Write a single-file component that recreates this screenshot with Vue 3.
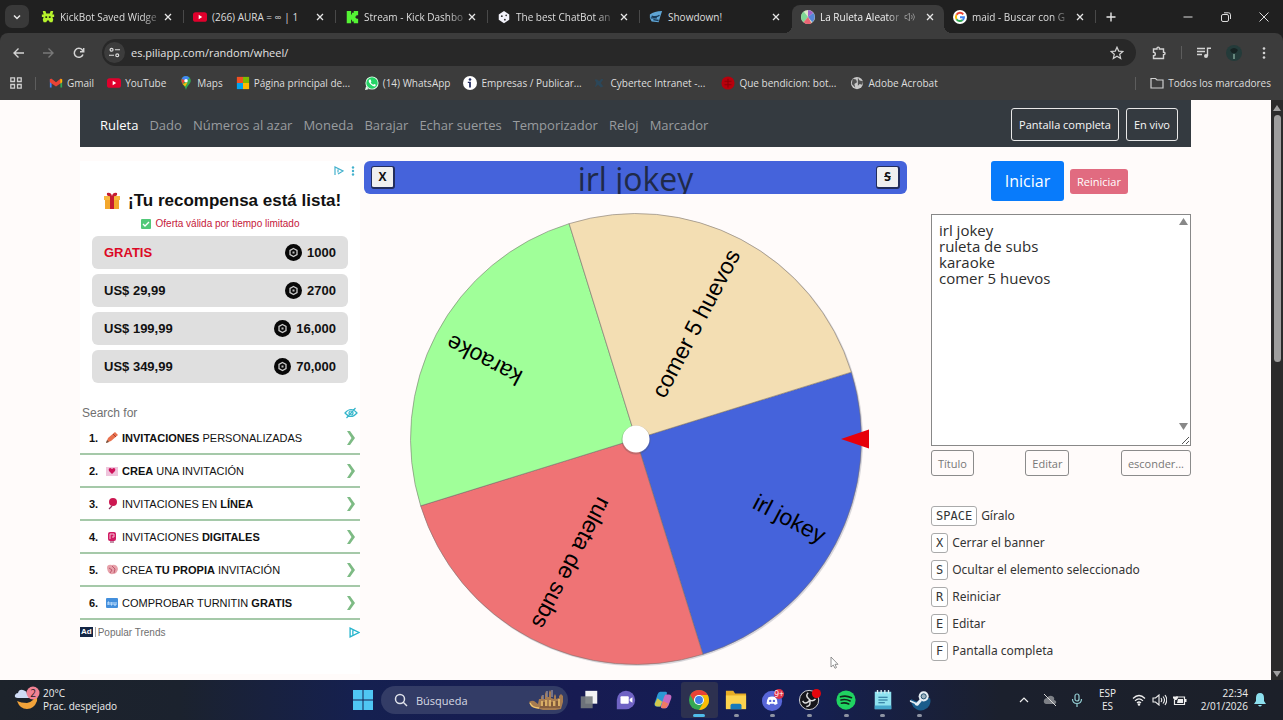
<template>
  <div class="desktop">
    <header class="browser">
      <div class="tabstrip">
        <button class="tab-search" aria-label="Buscar pestañas">
          <svg width="10" height="10" viewBox="0 0 10 10"><path d="M2 3.500l3 3 3-3" fill="none" stroke="#e8e8e8" stroke-width="1.500" /></svg>
        </button>
        <div v-for="(tab, i) in tabs" :key="i" class="tab" :class="{ active: tab.active, divided: tab.divided }">
          <svg class="icon14" viewBox="0 0 16 16" v-html="icons[tab.icon]"></svg>
          <span class="tab-title" :class="{ faded: tab.faded }">{{ tab.title }}</span>
          <svg v-if="tab.active" class="sound" viewBox="0 0 12 12">
            <path d="M1 4.500h2L5.500 2v8L3 7.500H1zM7.500 4q1.500 2 0 4M9 2.500q3 3.500 0 7" fill="none" stroke="#8b8b8b" />
          </svg>
          <button class="tab-close" aria-label="Cerrar">
            <svg width="8" height="8" viewBox="0 0 8 8"><path d="M1 1l6 6M7 1l-6 6" stroke="#e6e6e6" stroke-width="1.300" /></svg>
          </button>
        </div>
        <button class="new-tab" aria-label="Nueva pestaña">
          <svg width="10" height="10" viewBox="0 0 10 10"><path d="M5 .5v9M.5 5h9" stroke="#e6e6e6" stroke-width="1.400" /></svg>
        </button>
        <div class="window-buttons">
          <button aria-label="Minimizar"><svg width="10" height="10" viewBox="0 0 10 10"><path d="M.5 5h9" stroke="#ddd" /></svg></button>
          <button aria-label="Restaurar">
            <svg width="10" height="10" viewBox="0 0 10 10" fill="none" stroke="#ddd"><rect x=".5" y="2.500" width="7" height="7" rx="1.500" /><path d="M3 .8h4.500a2 2 0 0 1 2 2V7" /></svg>
          </button>
          <button aria-label="Cerrar ventana"><svg width="10" height="10" viewBox="0 0 10 10"><path d="M.5.5l9 9M9.500.5l-9 9" stroke="#ddd" /></svg></button>
        </div>
      </div>

      <div class="toolbar">
        <button class="nav-btn" aria-label="Atrás"><svg class="icon14" viewBox="0 0 14 14"><path d="M12 7H2M6.500 2.500L2 7l4.500 4.500" fill="none" stroke="#d4d4d4" stroke-width="1.400" /></svg></button>
        <button class="nav-btn" aria-label="Adelante"><svg class="icon14" viewBox="0 0 14 14"><path d="M1 7h10M6.500 2.500L11 7l-4.500 4.500" fill="none" stroke="#787878" stroke-width="1.400" /></svg></button>
        <button class="nav-btn" aria-label="Recargar">
          <svg class="icon14" viewBox="0 0 14 14"><path d="M11 8.500A4.500 4.500 0 1 1 10.300 4l1 1.300M11.700 2v3.700H8" fill="none" stroke="#d4d4d4" stroke-width="1.500" /></svg>
        </button>
        <div class="omnibox">
          <span class="site-info">
            <svg width="11" height="11" viewBox="0 0 12 12" fill="none" stroke="#dcdcdc" stroke-width="1.300"><circle cx="2.800" cy="3" r="1.600" /><path d="M6.500 3H12M0 9h5.500" /><circle cx="9" cy="9" r="1.600" /></svg>
          </span>
          <input v-model="url" aria-label="Dirección" spellcheck="false" />
          <svg class="icon14" viewBox="0 0 14 14"><path d="M7 1.200l1.700 3.900 4.200.4-3.200 2.800 1 4.200L7 10.300l-3.700 2.200 1-4.200L1.100 5.500l4.200-.4z" fill="none" stroke="#d4d4d4" stroke-width="1.200" /></svg>
        </div>
        <div class="tools">
          <svg class="icon14" viewBox="0 0 14 14"><path d="M1.500 3h3.500V2.300a1.200 1.200 0 0 1 2.400 0V3H11.500v3.200h.3a1.200 1.200 0 0 1 0 2.400h-.3V12.500h-10V9.800a1.800 1.800 0 0 0 0-3.600z" fill="none" stroke="#d4d4d4" stroke-width="1.400" /></svg>
          <i class="bar"></i>
          <svg class="icon14" viewBox="0 0 14 14"><path d="M0 2.500h8M0 5.500h8M0 8.500h5M10.500 10V2.200H14" fill="none" stroke="#d4d4d4" stroke-width="1.400" /><circle cx="9" cy="10" r="2" fill="#d4d4d4" /></svg>
          <svg class="avatar" viewBox="0 0 16 16"><circle cx="8" cy="8" r="8" fill="#243b3a" /><path d="M4 5q4-4 8 0l-2 3H6z" fill="#172323" /><path d="M8 9v5" stroke="#7da294" stroke-width="1.500" /></svg>
          <svg class="icon14" viewBox="0 0 14 14" fill="#d4d4d4"><circle cx="7" cy="2.500" r="1.300" /><circle cx="7" cy="7" r="1.300" /><circle cx="7" cy="11.500" r="1.300" /></svg>
        </div>
      </div>

      <nav class="bookmarks">
        <svg class="apps" viewBox="0 0 12 12" fill="none" stroke="#cfcfcf" stroke-width="1.300"><path d="M.8.8h3.700v3.700H.8zM7.500.8h3.700v3.700H7.500zM.8 7.500h3.700v3.700H.8zM7.500 7.500h3.700v3.700H7.500z" /></svg>
        <i class="bar"></i>
        <a v-for="b in bookmarks" :key="b.title" href="#" :class="{ long: b.long }">
          <svg class="icon14" viewBox="0 0 16 16" v-html="icons[b.icon]"></svg>{{ b.title }}
        </a>
        <div class="all-bookmarks">
          <i class="bar"></i>
          <a href="#">
            <svg class="icon14" viewBox="0 0 14 14"><path d="M1 2.500h4.500L7 4h6v8H1z" fill="none" stroke="#cfcfcf" stroke-width="1.200" /></svg>Todos los marcadores
          </a>
        </div>
      </nav>
    </header>

    <div class="viewport">
      <div class="page">
        <nav class="site-nav">
          <a v-for="(link, i) in links" :key="link" href="#" :class="{ current: i === 0 }">{{ link }}</a>
          <div class="site-actions">
            <button>Pantalla completa</button>
            <button>En vivo</button>
          </div>
        </nav>

        <main class="columns">
          <aside class="ads">
            <section class="offer">
              <div class="ad-marks">
                <svg width="10" height="10" viewBox="0 0 10 10"><path d="M1 9V1l8 4-5 3M4 3.500v3" fill="none" stroke="#43b1cd" stroke-width="1.200" /></svg>
                <svg width="4" height="10" viewBox="0 0 4 10" fill="#43b1cd"><circle cx="2" cy="1.500" r="1.200" /><circle cx="2" cy="5" r="1.200" /><circle cx="2" cy="8.500" r="1.200" /></svg>
              </div>
              <h2>
                <svg width="16" height="18" viewBox="0 0 16 18"><path d="M1 6h14v11H1z" fill="#f3a72d" /><path d="M0 4h16v4H0z" fill="#f8b83f" /><path d="M6 4h4v13H6zM8 4Q2 5 3 1q4-1 5 3 1-4 5-3 1 4-5 3z" fill="#c51d31" /></svg>
                ¡Tu recompensa está lista!
              </h2>
              <p>
                <svg width="10" height="10" viewBox="0 0 10 10"><rect width="10" height="10" rx="1" fill="#51c878" /><path d="M2 5l2 2 4-4" fill="none" stroke="#fff" stroke-width="1.300" /></svg>
                Oferta válida por tiempo limitado
              </p>
              <ul>
                <li v-for="o in offers" :key="o.coins">
                  <span :class="{ free: o.price === 'GRATIS' }">{{ o.price }}</span>
                  <span class="coins">
                    <svg width="17" height="17" viewBox="0 0 17 17"><circle cx="8.500" cy="8.500" r="8.500" fill="#080808" /><path d="M8.500 4.500l3.500 2v4l-3.500 2-3.500-2v-4z" fill="none" stroke="#ccc" stroke-width="1.300" /><rect x="7.500" y="7.500" width="2" height="2" fill="#bbb" /></svg>
                    {{ o.coins }}
                  </span>
                </li>
              </ul>
            </section>

            <section class="searches">
              <div class="search-head">
                Search for
                <svg width="14" height="12" viewBox="0 0 14 12" fill="none" stroke="#35b6cb" stroke-width="1.200"><path d="M1 6q6-7 12 0-6 7-12 0zM11.500 1l-9 10" /><circle cx="7" cy="6" r="2" /></svg>
              </div>
              <ol>
                <li v-for="(s, i) in searches" :key="i">
                  <b class="num">{{ i + 1 }}.</b>
                  <svg width="12" height="12" viewBox="0 0 12 12" v-html="s.icon"></svg>
                  <a href="#"><component :is="part.bold ? 'b' : 'span'" v-for="(part, j) in s.parts" :key="j">{{ part.text }}</component></a>
                  <svg class="arrow" width="9" height="14" viewBox="0 0 9 14"><path d="M0 0h3l5 7-5 7H0l4.500-7z" fill="#7dbb85" /></svg>
                </li>
              </ol>
              <footer>
                <span class="ad-badge">Ad</span><i></i><span>Popular Trends</span>
                <svg width="11" height="11" viewBox="0 0 10 10"><path d="M1 1l8 4-8 4zM3.500 3v4" fill="none" stroke="#27b5cd" stroke-width="1.200" /></svg>
              </footer>
            </section>
          </aside>

          <section class="game">
            <div class="banner">
              <button>X</button>
              <h1>{{ entries[0] }}</h1>
              <button><s>S</s></button>
            </div>
            <svg class="wheel" viewBox="-235 -235 470 470">
              <circle r="226" cx="1" cy="1" fill="#c9c8ce" opacity=".7" />
              <g class="slices" :transform="`rotate(${rotation})`">
                <g v-for="(slice, i) in slices" :key="i" :transform="`rotate(${slice.angle})`">
                  <path :d="slice.path" :fill="slice.color" stroke="#77706c" stroke-width=".5" />
                  <text x="212" y="7" text-anchor="end">{{ slice.label }}</text>
                </g>
              </g>
              <circle r="14.500" cy="1" fill="#555" opacity=".3" />
              <circle r="13.500" fill="#fff" />
              <path d="M205 0l28-9.500v19z" fill="#e6000a" />
            </svg>
            <svg class="cursor" width="9" height="13" viewBox="0 0 9 13"><path d="M1 1v10l2.300-2L5 12.300l1.500-.8L5 8.300h3z" fill="#fff" stroke="#777" stroke-width=".8" /></svg>
          </section>

          <aside class="controls">
            <div class="run">
              <button class="start" @click="spin">Iniciar</button>
              <button class="reset" @click="reset">Reiniciar</button>
            </div>
            <div class="list-box">
              <textarea v-model="list" aria-label="Lista" spellcheck="false"></textarea>
              <svg class="up" width="9" height="7" viewBox="0 0 9 7"><path d="M4.500 0L9 7H0z" fill="#888" /></svg>
              <svg class="down" width="9" height="7" viewBox="0 0 9 7"><path d="M4.500 7L9 0H0z" fill="#888" /></svg>
              <svg class="grip" width="9" height="9" viewBox="0 0 9 9"><path d="M1 8l7-7M5 8l3-3" stroke="#555" /></svg>
            </div>
            <div class="list-actions">
              <button>Título</button>
              <button>Editar</button>
              <button>esconder...</button>
            </div>
            <ul class="keys">
              <li v-for="k in keys" :key="k[0]"><kbd>{{ k[0] }}</kbd>{{ k[1] }}</li>
            </ul>
          </aside>
        </main>
      </div>
      <div class="scrollbar">
        <svg width="8" height="6" viewBox="0 0 8 6"><path d="M4 0l4 6H0z" fill="#a0a0a0" /></svg>
        <div class="thumb"></div>
        <svg class="scroll-down" width="8" height="6" viewBox="0 0 8 6"><path d="M4 6l4-6H0z" fill="#a0a0a0" /></svg>
      </div>
    </div>

    <footer class="taskbar">
      <div class="weather">
        <svg width="28" height="28" viewBox="0 0 28 28">
          <path d="M3 15q3 8 10 8t10-8q1-4-1-7-2 8-9 9-6 0-10-2z" fill="#f2a33a" />
          <path d="M4 12q-4 0-3-3 1-2 3-2 1-4 5-3 4 1 4 4 3 0 3 4z" fill="#cfdcf5" />
          <circle cx="19" cy="7" r="6.500" fill="#f08294" />
          <text x="19" y="11" text-anchor="middle" font-size="10" fill="#2a1b25">2</text>
        </svg>
        <div>20°C<br />Prac. despejado</div>
      </div>
      <div class="dock">
        <button class="start-menu" aria-label="Inicio">
          <svg width="20" height="20" viewBox="0 0 20 20" fill="#4fc6f3"><path d="M0 0h9.500v9.500H0zM10.500 0H20v9.500h-9.500zM0 10.500h9.500V20H0zM10.500 10.500H20V20h-9.500z" /></svg>
        </button>
        <label class="search">
          <svg width="14" height="14" viewBox="0 0 14 14"><circle cx="6" cy="6" r="4.500" fill="none" stroke="#dfe2ea" stroke-width="1.500" /><path d="M9 9l4 4" stroke="#dfe2ea" stroke-width="1.500" /></svg>
          <input placeholder="Búsqueda" />
          <svg width="38" height="20" viewBox="0 0 38 20">
            <path d="M1 12q3-2 5-1l4 3 1-5h2V7l1-2 1 2v2h2V4l1-3 1 3v3h2V2l1-2 1 2v6l3 1V6l1-2 1 2v3l3-1v-2l2-2 2 2v6l-2 7q-8 2-18 1L4 17z" fill="#a67b50" />
            <path d="M19 1v6M24 0v7M15 5v4" stroke="#8d8795" stroke-width="1.500" />
            <path d="M2 13q2 5 9 5M14 11v5M18 10v6M22 10v7M26 11v5M31 9v7" fill="none" stroke="#f0c56f" stroke-width="1.400" />
            <path d="M12 17h20M16 12v4M24 12v4M29 11v5" stroke="#66432e" stroke-width="1.200" />
          </svg>
        </label>
        <div class="apps-row">
          <button v-for="app in apps" :key="app.name" :class="{ running: app.running, focused: app.focused }" :aria-label="app.name">
            <svg width="24" height="24" viewBox="0 0 24 24" v-html="app.icon"></svg>
          </button>
        </div>
      </div>
      <div class="tray">
        <svg width="10" height="10" viewBox="0 0 10 10"><path d="M1 7l4-4 4 4" fill="none" stroke="#eee" stroke-width="1.200" /></svg>
        <svg class="cloud" width="14" height="14" viewBox="0 0 14 14"><path d="M3 11q-3-1-2-4 1-2 3-2 2-3 5-2 3 1 2 4 3 1 2 3l-1 1z" fill="#7d8086" /><path d="M1 1l12 12" stroke="#d8d8d8" /></svg>
        <svg class="mic" width="12" height="14" viewBox="0 0 12 14" fill="none" stroke="#93cdd2" stroke-width="1.200"><rect x="4" y="1" width="4" height="7" rx="2" /><path d="M1.500 6q0 4.500 4.500 4.500T10.500 6M6 10.500V14" /></svg>
        <div class="lang">ESP<br />ES</div>
        <svg width="14" height="12" viewBox="0 0 14 12" fill="none" stroke="#eee" stroke-width="1.200"><path d="M1 4.500q6-6 12 0M3 6.800q4-4 8 0M5 9q2-2 4 0" /><circle cx="7" cy="10.500" r=".7" /></svg>
        <svg width="15" height="12" viewBox="0 0 15 12" fill="none" stroke="#eee" stroke-width="1.100"><path d="M1 4h2.500L7 1v10L3.500 8H1zM9 4q1.500 2 0 4M11 2.500q3 3.500 0 7M13 1q3.500 5 0 10" /></svg>
        <svg width="14" height="12" viewBox="0 0 14 12"><path d="M3 3h8.500v7.500H1.500V6" fill="none" stroke="#eee" stroke-width="1.200" /><path d="M5 5h5v4H4zM12 5h1.500v3H12zM1 0v3M4 0v3M0 2.500h5V4L3.500 6h-2L0 4z" fill="#eee" /></svg>
        <div class="clock">22:34<br />2/01/2026</div>
        <svg width="12" height="14" viewBox="0 0 12 14" fill="#8de0ee"><path d="M6 0q4 0 4 5v3l2 3H0l2-3V5q0-5 4-5zM4 12h4q-2 3-4 0z" /></svg>
      </div>
    </footer>
  </div>
</template>

<script setup>
import { ref, computed } from 'vue'

const url = ref('es.piliapp.com/random/wheel/')
const list = ref('irl jokey\nruleta de subs\nkaraoke\ncomer 5 huevos')
const rotation = ref(27.75)

const colors = ['#4563db', '#ef7375', '#a0ff99', '#f3deb3']
const entries = computed(() => list.value.split('\n').filter((e) => e.trim()))
const slices = computed(() => {
  const n = entries.value.length
  const half = Math.PI / n
  const x = 225.5 * Math.cos(half)
  const y = 225.5 * Math.sin(half)
  return entries.value.map((label, i) => ({
    label,
    angle: (360 / n) * i,
    color: colors[i % colors.length],
    path: `M0 0L${x} ${-y}A225.5 225.5 0 0 1 ${x} ${y}Z`
  }))
})
const spin = () => {
  rotation.value += 720 + Math.random() * 360
}
const reset = () => {
  rotation.value = 27.75
}

const icons = {
  kickbot: '<path d="M2 1h3l1 3h4l1-3h3l-1 4h2v3h-2l1 3-1 3h-3l-1-2H7l-1 2H3l-1-3 1-3H1V5h2z" fill="#b6f22c"/><path d="M5 7h2v2H5zM9 7h2v2H9z" fill="#25300f"/>',
  youtube: '<rect x="0" y="2.500" width="16" height="11" rx="3" fill="#e0002c"/><path d="M6.500 5.500v5l4-2.500z" fill="#fff"/>',
  kick: '<path d="M2 1h5v4h1V3h2V1h5v5h-2v1h-1v2h1v1h2v5h-5v-2H8v-2H7v4H2z" fill="#54f434"/>',
  dice: '<path d="M8 1l6 4v6l-6 4-6-4V5z" fill="#f2f2fa"/><circle cx="5.500" cy="7" r="1.100" fill="#333"/><circle cx="9" cy="11" r="1.100" fill="#333"/><circle cx="10.500" cy="6" r="1" fill="#333"/>',
  showdown: '<path d="M1 5q5-4 14-4l-2 6-2 7-8-1-2-4z" fill="#5fa5d5"/><path d="M3 7q5 2 9-1M5 11l6 1M2 9h7" stroke="#193b59" stroke-width="1.600" fill="none"/>',
  wheel: '<circle cx="8" cy="8" r="8" fill="#dce9c8"/><path d="M8 8L3 1.800A8 8 0 0 0 3 14z" fill="#80d796"/><path d="M8 8l6-5a8 8 0 0 1-1 11z" fill="#5686d8"/><path d="M8 8L3 14a8 8 0 0 0 9 1z" fill="#eb6575"/><path d="M8 8V0a8 8 0 0 1 6 3z" fill="#a064cb"/>',
  google: '<circle cx="8" cy="8" r="8" fill="#fff"/><g fill="none" stroke-width="2.200"><path d="M11.700 5A4.700 4.700 0 0 0 4 5.500" stroke="#ea4335"/><path d="M4 5.500a4.700 4.700 0 0 0 0 5" stroke="#fbbc05"/><path d="M4 10.500a4.700 4.700 0 0 0 7 1" stroke="#34a853"/><path d="M11 11.500q1.700-1.500 1.600-3.300H8" stroke="#4285f4"/></g>',
  gmail: '<path d="M1 13V4l2-1v10z" fill="#4285f4"/><path d="M13 3l2 1v9h-2z" fill="#34a853"/><path d="M1 3.500l2-.5 5 4 5-4 2 .5V7l-7 5-7-5z" fill="#ea4335"/><path d="M13 3l2 1v3l-2 1.500z" fill="#fbbc04"/>',
  maps: '<path d="M8 0a5.500 5.500 0 0 1 5.500 5.500C13.500 9 9 11 8 16 7 11 2.500 9 2.500 5.500A5.500 5.500 0 0 1 8 0z" fill="#34a853"/><path d="M8 0a5.500 5.500 0 0 0-5 3.500L8 6l4-4Q10 0 8 0z" fill="#4285f4"/><path d="M3 3.500Q2 6 4 9l4-4z" fill="#ea4335"/><path d="M4 9l3 3 3-5z" fill="#fbbc04"/><circle cx="8" cy="5.500" r="2" fill="#fff"/>',
  microsoft: '<path d="M1 1h7v7H1z" fill="#f25022"/><path d="M8 1h7v7H8z" fill="#7fba00"/><path d="M1 8h7v7H1z" fill="#00a4ef"/><path d="M8 8h7v7H8z" fill="#ffb900"/>',
  whatsapp: '<circle cx="8" cy="8" r="7.500" fill="#e8fff0"/><path d="M0 16l1.300-4.500L4 15z" fill="#e8fff0"/><circle cx="8" cy="8" r="6.500" fill="#25d366"/><path d="M5 4q-2 2 1 5t5.500 3l1-2-2-1-1 1Q7 9 6.500 7.500l.8-1L6.500 4z" fill="#fff"/>',
  info: '<circle cx="8" cy="8" r="8" fill="#fff"/><circle cx="8" cy="4" r="1.500" fill="#222b60"/><path d="M5.500 6.500H9V13H7V8H5.500z" fill="#222b60"/>',
  cyber: '<path d="M3 4h3l2 2 3-3 2 1-3 4 3 4-3 1-3-3-4 3 2-5z" fill="#2c4759"/>',
  red: '<circle cx="8" cy="8" r="7.500" fill="#b8000c"/><path d="M4 6h8M4 10h8M8 3v10" stroke="#8a0009" stroke-width="1.200"/>',
  globe: '<circle cx="8" cy="8" r="7" fill="#c9c9c9"/><path d="M3 3l4 1 1 3-3 2 1 4-4-4zM9 2l2 3 4 1-1 4-3-1-2 2z" fill="#515151"/>'
}

const tabs = [
  { title: 'KickBot Saved Widge', icon: 'kickbot', divided: true, faded: true },
  { title: '(266) AURA = ∞ | 1', icon: 'youtube', divided: true },
  { title: 'Stream - Kick Dashbo', icon: 'kick', divided: true, faded: true },
  { title: 'The best ChatBot an', icon: 'dice', divided: true, faded: true },
  { title: 'Showdown!', icon: 'showdown' },
  { title: 'La Ruleta Aleator', icon: 'wheel', active: true, faded: true },
  { title: 'maid - Buscar con G', icon: 'google', divided: true, faded: true }
]

const bookmarks = [
  { title: 'Gmail', icon: 'gmail' },
  { title: 'YouTube', icon: 'youtube' },
  { title: 'Maps', icon: 'maps' },
  { title: 'Página principal de...', icon: 'microsoft', long: true },
  { title: '(14) WhatsApp', icon: 'whatsapp' },
  { title: 'Empresas / Publicar...', icon: 'info', long: true },
  { title: 'Cybertec Intranet -...', icon: 'cyber', long: true },
  { title: 'Que bendicion: bot...', icon: 'red', long: true },
  { title: 'Adobe Acrobat', icon: 'globe' }
]

const links = ['Ruleta', 'Dado', 'Números al azar', 'Moneda', 'Barajar', 'Echar suertes', 'Temporizador', 'Reloj', 'Marcador']

const offers = [
  { price: 'GRATIS', coins: '1000' },
  { price: 'US$ 29,99', coins: '2700' },
  { price: 'US$ 199,99', coins: '16,000' },
  { price: 'US$ 349,99', coins: '70,000' }
]

const searches = [
  { parts: [{ text: 'INVITACIONES', bold: true }, { text: ' PERSONALIZADAS' }], icon: '<path d="M0 11l2-5 7-6 3 3-7 6z" fill="#e8704d"/><path d="M0 11l1-3 2 2z" fill="#654"/><path d="M7 2l3 3" stroke="#a33b32"/>' },
  { parts: [{ text: 'CREA', bold: true }, { text: ' UNA INVITACIÓN' }], icon: '<path d="M0 2h12v9H0z" fill="#efc4dc"/><path d="M6 9L3 6q-1-3 1.500-3L6 4l1.500-1Q10 3 9 6z" fill="#cf145b"/>' },
  { parts: [{ text: 'INVITACIONES EN ' }, { text: 'LÍNEA', bold: true }], icon: '<circle cx="7" cy="4" r="4" fill="#cc1751"/><path d="M6 8q-1 1-3 3" stroke="#8b315f" stroke-width="1.200" fill="none"/>' },
  { parts: [{ text: 'INVITACIONES ' }, { text: 'DIGITALES', bold: true }], icon: '<rect x="2" y="1" width="8" height="9" rx="2" fill="#d01b62"/><path d="M4 8V3h4v3H6" stroke="#f5bdd3" fill="none"/><path d="M4 11h4" stroke="#8a2451"/>' },
  { parts: [{ text: 'CREA ' }, { text: 'TU PROPIA', bold: true }, { text: ' INVITACIÓN' }], icon: '<path d="M1 4q0-4 5-3 5-1 6 4-1 5-5 5-5 1-6-6z" fill="#e7a1aa"/><path d="M3 4l3 2-2 3M6 2l3 3-1 4" stroke="#bd576d" fill="none"/>' },
  { parts: [{ text: 'COMPROBAR TURNITIN ' }, { text: 'GRATIS', bold: true }], icon: '<rect y="1" width="12" height="10" rx="1" fill="#438fdc"/><path d="M2 8V5h1v3M5 5v3h1V5M8 5v3h2V5" stroke="#cae5ff" fill="none"/>' }
]

const keys = [
  ['SPACE', 'Gíralo'],
  ['X', 'Cerrar el banner'],
  ['S', 'Ocultar el elemento seleccionado'],
  ['R', 'Reiniciar'],
  ['E', 'Editar'],
  ['F', 'Pantalla completa']
]

const apps = [
  { name: 'Vista de tareas', icon: '<path d="M8 2h13v14H8z" fill="#f3f3f3"/><path d="M3 8h13v13H3z" fill="#777c7e" opacity=".9"/>' },
  { name: 'Chat', icon: '<path d="M2 22V12a10 10 0 1 1 10 10z" fill="#6f63c4"/><rect x="6" y="8" width="9" height="8" rx="1" fill="#fff"/><path d="M16 11l3-2v6l-3-2z" fill="#fff"/>' },
  { name: 'Copilot', icon: '<path d="M9 3h6q2 0 1 3l-3 10q-1 3-4 3H5q-3 0-2-4l3-9q1-3 3-3z" fill="#2b99d4"/><path d="M6 10l-3 6q0 3 3 3h3l2-5z" fill="#d1c94d"/><path d="M15 6h3q4 0 3 4l-3 8q-1 3-4 3h-3q-2 0-1-3l3-9q1-3 2-3z" fill="#c569c0"/><path d="M12 13l-2 6q0 2 2 2h3l3-5z" fill="#ee7b61"/>' },
  { name: 'Chrome', focused: true, icon: '<circle cx="12" cy="12" r="11" fill="#35a853"/><path d="M2.500 6.500a11 11 0 0 1 19 0H12a5.500 5.500 0 0 0-4.800 8.300z" fill="#e94235"/><path d="M21.500 6.500A11 11 0 0 1 12 23l4.800-8.300A5.500 5.500 0 0 0 12 6.500z" fill="#fbbc05"/><circle cx="12" cy="12" r="5.500" fill="#fff"/><circle cx="12" cy="12" r="4.300" fill="#3f7fe8"/>' },
  { name: 'Explorador', running: true, icon: '<path d="M1 2h8l2 3h12v16H1z" fill="#e7ac25"/><path d="M1 7h22v15H1z" fill="#fcd34f"/><path d="M6 22v-4q0-2 2-2h8q2 0 2 2v4z" fill="#187abb"/>' },
  { name: 'Discord', running: true, icon: '<circle cx="11" cy="13" r="11" fill="#5866d8"/><path d="M7 9q4-1.500 8 0 2 3 2 7l-3 1.500-1-1.500H9l-1 1.500L5 16q0-4 2-7z" fill="#fff"/><circle cx="9" cy="13" r="1.300" fill="#5866d8"/><circle cx="13" cy="13" r="1.300" fill="#5866d8"/><circle cx="18.500" cy="5.500" r="5.500" fill="#df3348"/><text x="18.500" y="9" text-anchor="middle" font-size="9" fill="#fff">9+</text>' },
  { name: 'OBS', running: true, icon: '<circle cx="11" cy="12" r="10.500" fill="#15151a" stroke="#ddd"/><path d="M10 4q-3 3 0 6l2 2q3 2 6-1M12 12l-2 2q-4 3-6-1M12 12v3q0 4-4 4" stroke="#ddd" stroke-width="1.600" fill="none"/><circle cx="19" cy="5" r="5" fill="#e5060d"/>' },
  { name: 'Spotify', running: true, icon: '<circle cx="12" cy="12" r="10.500" fill="#20d361"/><path d="M6 8.500q6-2 12 1M6.500 12q5-1.500 10 1M7 15.500q4-1 8 .8" stroke="#10251a" stroke-width="1.800" fill="none" stroke-linecap="round"/>' },
  { name: 'Bloc de notas', running: true, icon: '<path d="M3 3h18v19H3z" fill="#8fe2ef"/><path d="M3 18h18v4H3z" fill="#45a7cc"/><path d="M7 9h10M7 12h10M7 15h7" stroke="#216a92" stroke-width="1.300"/><path d="M6 1v4M10 1v4M14 1v4M18 1v4" stroke="#d7edf1" stroke-width="1.500"/>' },
  { name: 'Steam', running: true, icon: '<path d="M2 11l7 3 5-5 9 1a10 10 0 0 1-20 6z" fill="#1a5d8b"/><circle cx="16" cy="8" r="5.500" fill="#e6eef4"/><circle cx="16" cy="8" r="2.800" fill="#9db4c2" stroke="#1a4968"/><path d="M1 12l7 3 4-4 2 2-4 5q-3 1-4-2l-5-2z" fill="#e6eef4"/>' }
]
</script>

<style>
body {
  margin: 0;
}
</style>

<style scoped>
* {
  box-sizing: border-box;
}
button,
input,
textarea {
  font-family: inherit;
  margin: 0;
}
button {
  padding: 0;
  border: 0;
  background: none;
  cursor: pointer;
}
ul,
ol,
h1,
h2,
p {
  margin: 0;
  padding: 0;
  list-style: none;
}
a {
  text-decoration: none;
  color: inherit;
}
svg {
  flex: none;
}
.desktop {
  min-height: 100vh;
  display: flex;
  flex-direction: column;
  font-family: 'Open Sans', 'Noto Sans', sans-serif;
}

/* browser */
.browser {
  background: #202020;
  color: #dedede;
  font: 10px 'Open Sans', sans-serif;
}
.icon14 {
  width: 14px;
  height: 14px;
}
.bar {
  width: 1px;
  height: 13px;
  background: #5d5d5d;
}
.tabstrip {
  height: 33px;
  display: flex;
  align-items: center;
  padding-left: 5px;
}
.tab-search {
  width: 24px;
  height: 23px;
  border-radius: 7px;
  background: #393939;
  margin-right: 3px;
}
.tab {
  position: relative;
  flex: 0 1 152px;
  min-width: 0;
  height: 28px;
  margin-top: 5px;
  padding: 0 12px 5px 9px;
  display: flex;
  align-items: center;
  gap: 5px;
}
.divided::after {
  content: '';
  position: absolute;
  right: 0;
  top: 5px;
  width: 1px;
  height: 13px;
  background: #494949;
}
.tab.active {
  background: #3c3c3c;
  border-radius: 8px 8px 0 0;
  color: #f2f2f2;
}
.tab.active::before,
.tab.active::after {
  content: '';
  position: absolute;
  bottom: 0;
  left: -8px;
  width: 8px;
  height: 8px;
  background: radial-gradient(circle at 0 0, transparent 8px, #3c3c3c 8px);
}
.tab.active::after {
  left: 100%;
  background: radial-gradient(circle at 100% 0, transparent 8px, #3c3c3c 8px);
}
.tab-title {
  white-space: nowrap;
}
.faded {
  mask-image: linear-gradient(90deg, #000 85%, rgba(0, 0, 0, 0.3));
}
.sound {
  width: 12px;
  height: 12px;
  margin-left: auto;
}
.tab-close {
  width: 8px;
  height: 8px;
  display: flex;
  margin-left: auto;
}
.sound + .tab-close {
  margin-left: 5px;
}
.new-tab {
  width: 30px;
  height: 28px;
}
.window-buttons {
  margin-left: auto;
  display: flex;
}
.window-buttons button {
  width: 38px;
  height: 33px;
}
.toolbar {
  height: 36px;
  background: #3c3c3c;
  border-radius: 8px 8px 0 0;
  display: flex;
  align-items: center;
  padding: 3px 12px 0;
}
.nav-btn {
  width: 14px;
  height: 14px;
  margin-right: 16px;
}
.omnibox {
  flex: 1;
  height: 27px;
  border-radius: 14px;
  background: #282828;
  display: flex;
  align-items: center;
  padding: 0 12px 0 2px;
}
.site-info {
  width: 21px;
  height: 21px;
  border-radius: 50%;
  background: #3c3c3c;
  display: flex;
  align-items: center;
  justify-content: center;
}
.omnibox input {
  flex: 1;
  border: 0;
  outline: 0;
  background: none;
  color: #e3e3e3;
  padding: 0 6px;
  font-size: 11px;
}
.tools {
  display: flex;
  align-items: center;
  gap: 15px;
  padding-left: 16px;
}
.avatar {
  width: 16px;
  height: 16px;
}
.bookmarks {
  height: 31px;
  padding: 0 12px 3px 10px;
  background: #3c3c3c;
  display: flex;
  align-items: center;
  gap: 13px;
}
.bookmarks a {
  display: flex;
  align-items: center;
  gap: 4px;
  white-space: nowrap;
}
.bookmarks .long {
  width: 116px;
}
.apps {
  width: 12px;
  height: 12px;
}
.all-bookmarks {
  margin-left: auto;
  display: flex;
  align-items: center;
  gap: 14px;
}

/* page */
.viewport {
  flex: 1;
  display: flex;
  background: #fffbfa;
}
.page {
  flex: 1;
  max-width: 1111px;
  margin: 0 auto;
}
.site-nav {
  height: 47px;
  background: #343a40;
  padding: 2px 13px 0 20px;
  display: flex;
  align-items: center;
  gap: 11px;
  color: #999c9f;
  font-size: 13px;
}
.current {
  color: #fff;
}
.site-actions {
  margin-left: auto;
  display: flex;
  gap: 7px;
}
.site-actions button {
  height: 33px;
  padding: 0 7px;
  border: 1px solid #e8e8e8;
  border-radius: 3px;
  color: #f8f8f8;
  font-size: 11px;
}
.columns {
  display: grid;
  grid-template-columns: 280px minmax(0, 1fr) 260px;
  padding-top: 14px;
}
.ads {
  font-family: 'Liberation Sans', Arial, sans-serif;
  background: #fff;
  color: #111;
}
.offer {
  padding: 5px 12px 0;
}
.ad-marks {
  height: 10px;
  display: flex;
  justify-content: flex-end;
  gap: 7px;
  margin-right: -7px;
}
.offer h2 {
  display: flex;
  align-items: center;
  gap: 8px;
  padding-left: 12px;
  margin-top: 15px;
  font-size: 17px;
  line-height: 20px;
  white-space: nowrap;
}
.offer p {
  display: flex;
  align-items: center;
  justify-content: center;
  gap: 5px;
  height: 25px;
  font-size: 10px;
  color: #c5173a;
}
.offer ul {
  display: grid;
  gap: 5px;
}
.offer li {
  height: 33px;
  padding: 0 12px;
  border-radius: 6px;
  background: #dfdfdf;
  display: flex;
  align-items: center;
  justify-content: space-between;
  font-size: 13px;
  font-weight: bold;
}
.free {
  color: #dc0824;
}
.coins {
  display: flex;
  align-items: center;
  gap: 5px;
}
.search-head {
  display: flex;
  justify-content: space-between;
  align-items: center;
  padding: 0 2px;
  margin-top: 21px;
  height: 18px;
  color: #707070;
  font-size: 12px;
}
.searches li {
  height: 33px;
  display: flex;
  align-items: center;
  gap: 4px;
  padding: 0 4px 0 9px;
  border-bottom: 2px solid #a5c9a9;
  font-size: 11px;
  white-space: pre;
}
.num {
  width: 13px;
}
.arrow {
  margin-left: auto;
}
.searches footer {
  height: 24px;
  display: flex;
  align-items: center;
  color: #6f6f6f;
  font-size: 10px;
}
.searches footer svg {
  margin-left: auto;
}
.searches footer i {
  width: 1px;
  height: 10px;
  background: #aaa;
  margin: 0 2px;
}
.ad-badge {
  padding: 0 1px;
  background: #142746;
  color: #fff;
  font-size: 8px;
  font-weight: bold;
  line-height: 10px;
}
.game {
  position: relative;
  margin: 0 24px 0 4px;
}
.banner {
  height: 33px;
  padding: 0 7px;
  border-radius: 6px;
  background: #4563db;
  display: flex;
  align-items: center;
  justify-content: space-between;
  overflow: hidden;
}
.banner h1 {
  color: #1f2a49;
  font-size: 32px;
  font-weight: 400;
  line-height: 36px;
  padding-top: 2px;
}
.banner button {
  width: 24px;
  height: 23px;
  border: 1px solid #222d5d;
  border-width: 1px 2px 2px 1px;
  border-radius: 3px;
  background: #f0f0f0;
  color: #111;
  font-size: 12px;
  font-weight: 700;
  line-height: 20px;
}
.wheel {
  display: block;
  width: 100%;
  max-width: 470px;
  margin: 10px auto 0;
}
.slices text {
  font: 23px 'Liberation Sans', Arial, sans-serif;
}
.cursor {
  position: absolute;
  left: 466px;
  top: 495px;
}
.run {
  display: flex;
  align-items: center;
  justify-content: center;
  gap: 6px;
  margin-right: 3px;
}
.run button {
  color: #fff;
  border-radius: 3px;
}
.run .start {
  width: 73px;
  height: 40px;
  background: #087bfb;
  font-size: 16px;
}
.run .reset {
  width: 58px;
  height: 25px;
  background: #e16b80;
  font-size: 11px;
}
.list-box {
  position: relative;
  margin-top: 13px;
}
.list-box textarea {
  display: block;
  width: 100%;
  height: 232px;
  padding: 7px;
  border: 1px solid #888;
  border-radius: 0;
  outline: 0;
  resize: none;
  background: #fff;
  color: #2d2d2d;
  font-size: 15px;
  line-height: 16px;
}
.up,
.down,
.grip {
  position: absolute;
  right: 3px;
}
.up {
  top: 4px;
}
.down {
  bottom: 16px;
}
.grip {
  right: 1px;
  bottom: 1px;
}
.list-actions {
  display: flex;
  justify-content: space-between;
  margin-top: 4px;
}
.list-actions button {
  height: 26px;
  padding: 0 6px;
  border: 1px solid #8b8b8b;
  border-radius: 3px;
  color: #777;
  font-size: 11px;
}
.keys {
  display: grid;
  gap: 6px;
  margin-top: 29px;
  color: #343434;
  font-family: 'Noto Sans', sans-serif;
  font-size: 12px;
}
.keys li {
  height: 21px;
  display: flex;
  align-items: center;
  gap: 4px;
}
.keys kbd {
  height: 20px;
  padding: 0 4px;
  border: 1px solid #aaa;
  border-radius: 3px;
  background: #fff;
  font: 12px/18px 'DejaVu Sans Mono', monospace;
}
.scrollbar {
  width: 12px;
  background: #2b2b2b;
  display: flex;
  flex-direction: column;
  align-items: center;
  padding: 5px 0 3px;
}
.thumb {
  width: 7px;
  height: 247px;
  margin-top: 4px;
  border-radius: 4px;
  background: #9e9e9e;
}
.scroll-down {
  margin-top: auto;
}

/* taskbar */
.taskbar {
  height: 40px;
  display: grid;
  grid-template-columns: 1fr auto 1fr;
  align-items: center;
  background: linear-gradient(90deg, #1d232b, #1b222e 14%, #152050 28%, #171b52 45%, #141f54 62%, #1b202d 78%, #1c2029);
  color: #eee;
  font: 11px/13px 'Open Sans', sans-serif;
}
.weather {
  display: flex;
  gap: 1px;
  padding-left: 14px;
  align-items: center;
}
.weather,
.lang,
.clock {
  font-size: 10px;
}
.dock {
  display: flex;
  align-items: center;
}
.start-menu {
  width: 36px;
  height: 38px;
  display: flex;
  align-items: center;
  justify-content: center;
}
.search {
  width: 187px;
  height: 28px;
  margin-right: 3px;
  padding: 0 2px 0 13px;
  border-radius: 14px;
  background: #333c66;
  display: flex;
  align-items: center;
}
.search input {
  flex: 1;
  min-width: 0;
  border: 0;
  outline: 0;
  padding: 0 8px;
  background: none;
  font-size: 11px;
}
.search input::placeholder {
  color: #d6d9e3;
}
.apps-row {
  width: 367px;
  display: grid;
  grid-template-columns: repeat(10, 1fr);
}
.apps-row button {
  position: relative;
  height: 36px;
  display: flex;
  align-items: center;
  justify-content: center;
}
.apps-row svg {
  width: 22px;
  height: 22px;
}
.running::after,
.focused::after {
  content: '';
  position: absolute;
  bottom: 1px;
  width: 5px;
  height: 3px;
  border-radius: 2px;
  background: #8d93a2;
}
.apps-row .focused {
  background: #2d3150;
  border-radius: 3px;
}
.focused::after {
  width: 12px;
  background: #50bce9;
}
.tray {
  display: flex;
  align-items: center;
  justify-content: flex-end;
  gap: 6px;
  padding-right: 17px;
}
.cloud,
.mic {
  margin-left: 8px;
}
.lang {
  margin: 0 10px;
  text-align: center;
}
.clock {
  width: 55px;
  text-align: right;
}
</style>
